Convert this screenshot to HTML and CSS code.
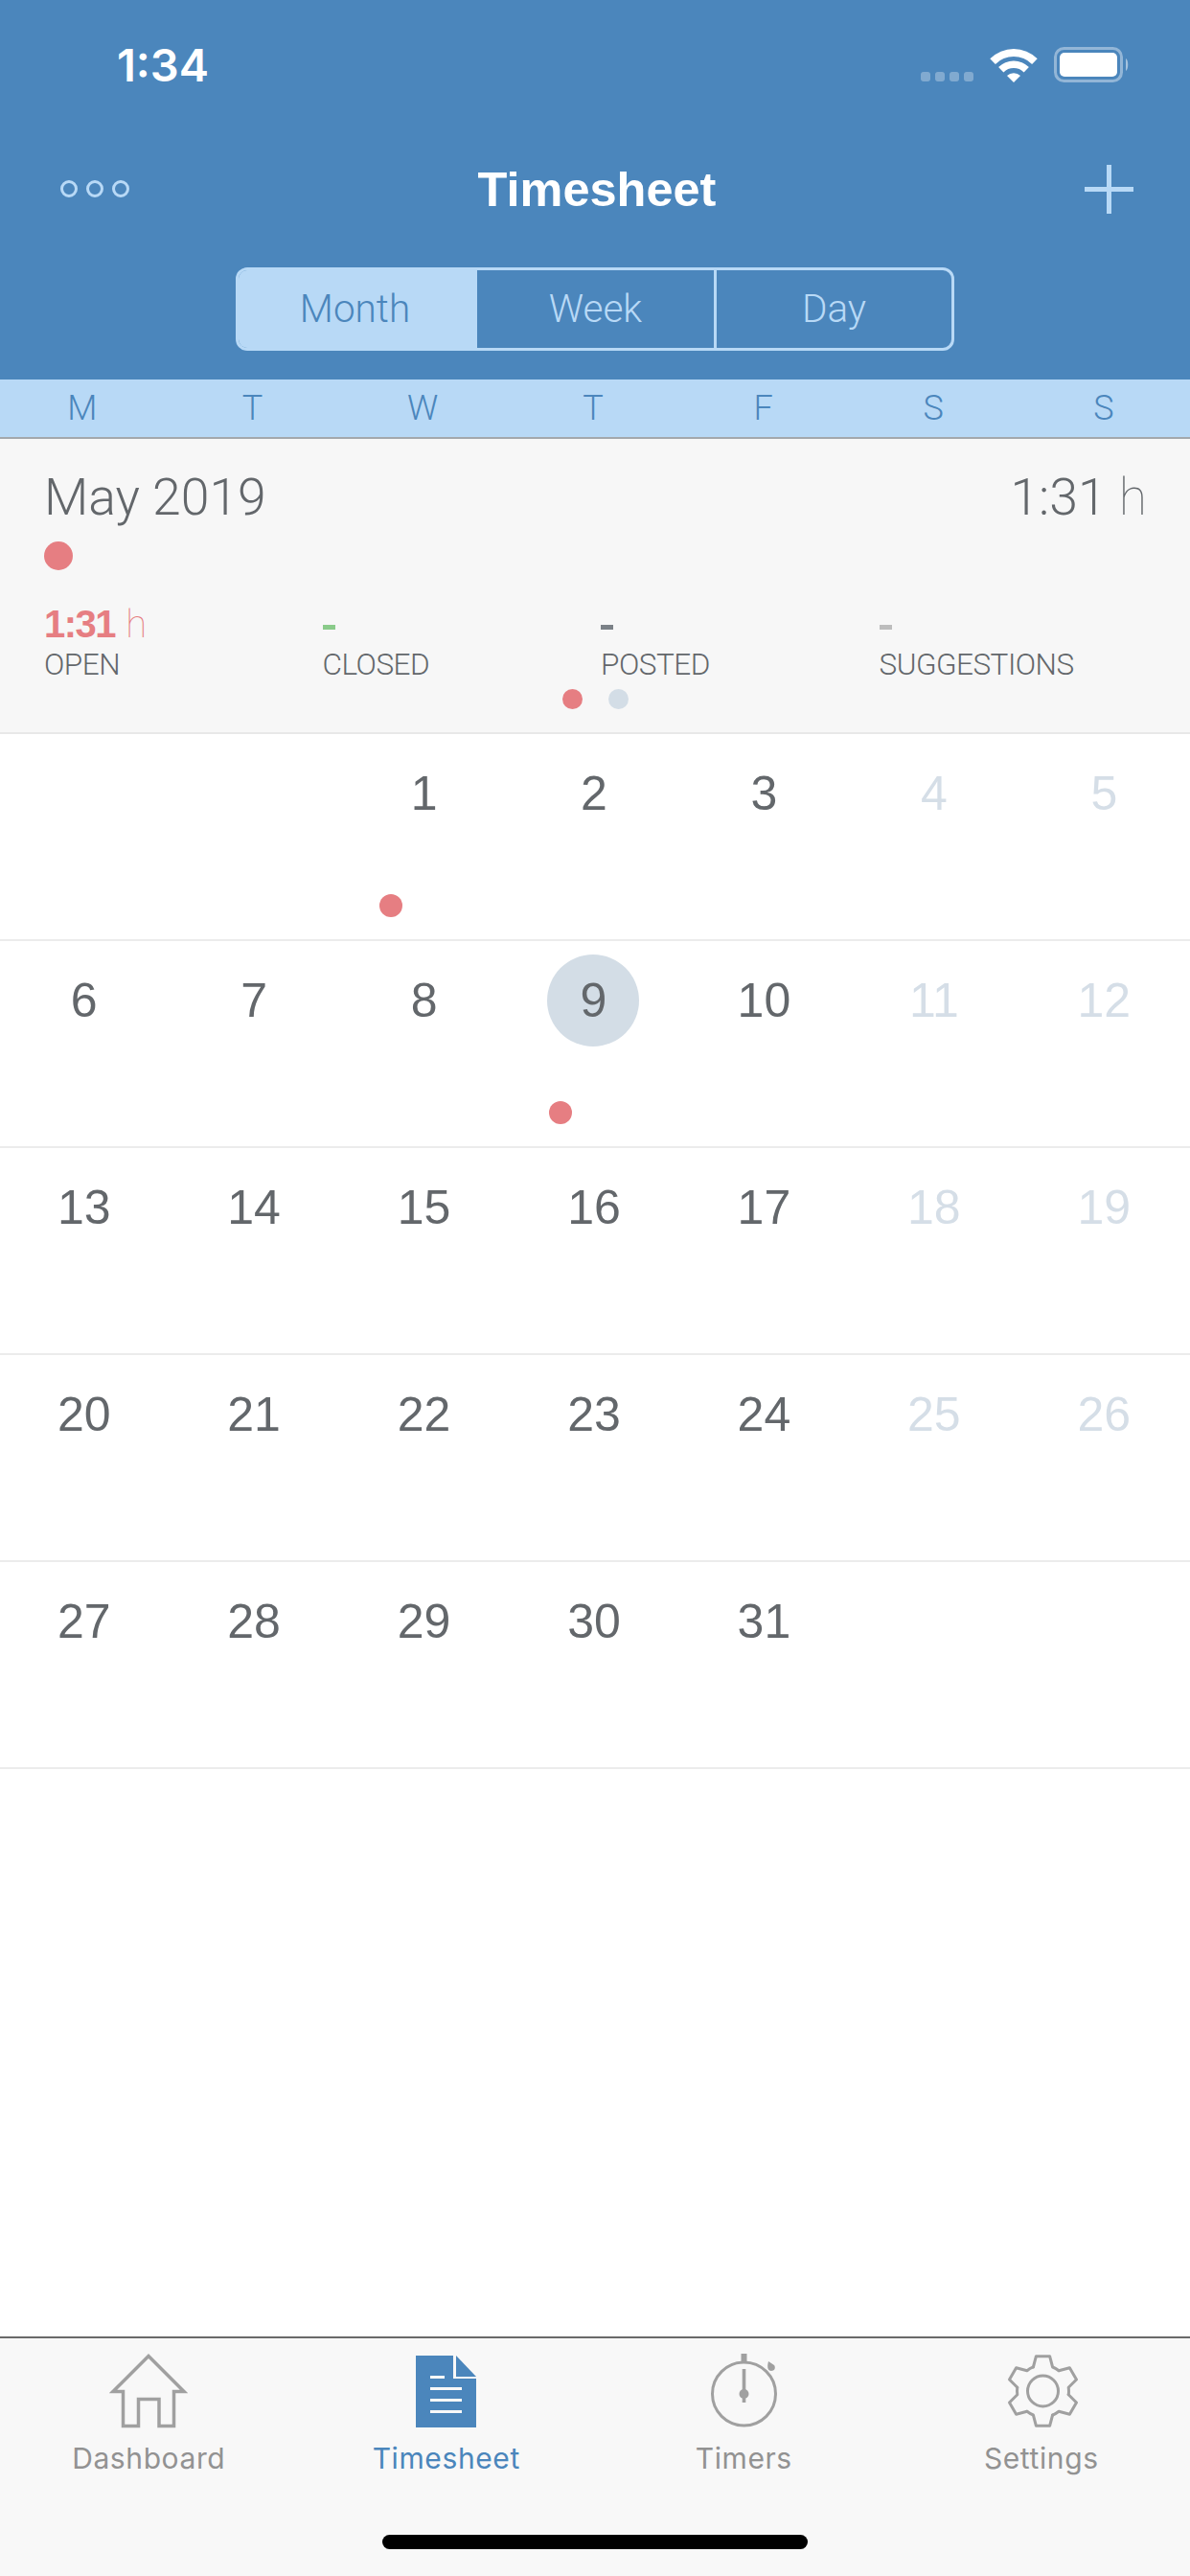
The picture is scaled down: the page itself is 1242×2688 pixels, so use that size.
FILE: index.html
```html
<!DOCTYPE html>
<html lang="en">
<head>
    <meta charset="UTF-8">
    <meta name="viewport" content="width=device-width, initial-scale=1.0">
    <title>Timesheet</title>
    <link rel="stylesheet" href="styles.css">
</head>
<body>
    <div id="app">
        <div id="header">
            <div class="status">
                <span class="clock">1:34</span>
                <div class="statusIcons">
                    <div class="signal"><i></i><i></i><i></i><i></i></div>
                    <svg class="wifi" width="50" height="36" viewBox="-25 -36 50 36" fill="#fff">
                        <path d="M-24.7-24.7A35 35 0 0 1 24.7-24.7L19.1-19.1A27 27 0 0 0-19.1-19.1Z"/>
                        <path d="M-15.9-15.9A22.5 22.5 0 0 1 15.9-15.9L10.6-10.6A15 15 0 0 0-10.6-10.6Z"/>
                        <path d="M-7-7A10 10 0 0 1 7-7L0 0Z"/>
                    </svg>
                    <svg class="battery" width="79" height="37" viewBox="0 0 79 37">
                        <rect x="1.5" y="1.5" width="69" height="34" rx="9" fill="none" stroke="#fff" stroke-opacity=".4" stroke-width="3"/>
                        <rect x="6" y="6" width="60" height="25" rx="5" fill="#fff"/>
                        <path d="M75 12C78 14 78 23 75 25Z" fill="#fff" fill-opacity=".5"/>
                    </svg>
                </div>
            </div>

            <div class="nav">
                <svg class="navLeft" width="72" height="18" viewBox="0 0 72 18" fill="none" stroke="#b8d9f6" stroke-width="3">
                    <circle cx="9" cy="9" r="7.5"/>
                    <circle cx="36" cy="9" r="7.5"/>
                    <circle cx="63" cy="9" r="7.5"/>
                </svg>
                <h1 class="title">Timesheet</h1>
                <svg class="navRight" width="51" height="51" viewBox="0 0 51 51" fill="#b8d9f6">
                    <rect x="23" y="0" width="5" height="51"/>
                    <rect x="0" y="23" width="51" height="5"/>
                </svg>
            </div>

            <div class="segments">
                <div class="segment active">Month</div>
                <div class="segment week">Week</div>
                <div class="segment">Day</div>
            </div>
        </div>

        <div class="weekdays">
            <span>M</span><span>T</span><span>W</span><span>T</span><span>F</span><span>S</span><span>S</span>
        </div>

        <div class="summary">
            <div class="monthRow">
                <span>May 2019</span>
                <span>1:31 <em>h</em></span>
            </div>
            <div class="monthDot"></div>
            <div class="stats">
                <div class="stat open">
                    <div class="value"><b>1:31</b> <em>h</em></div>
                    <div class="label">OPEN</div>
                </div>
                <div class="stat">
                    <div class="value"><i class="dash green"></i></div>
                    <div class="label">CLOSED</div>
                </div>
                <div class="stat">
                    <div class="value"><i class="dash grey"></i></div>
                    <div class="label">POSTED</div>
                </div>
                <div class="stat">
                    <div class="value"><i class="dash light"></i></div>
                    <div class="label">SUGGESTIONS</div>
                </div>
            </div>
            <div class="pager"><i class="on"></i><i></i></div>
        </div>

        <div class="calendar">
            <div class="day"></div>
            <div class="day"></div>
            <div class="day"><div class="num">1</div><div class="dot"></div></div>
            <div class="day"><div class="num">2</div></div>
            <div class="day"><div class="num">3</div></div>
            <div class="day off"><div class="num">4</div></div>
            <div class="day off"><div class="num">5</div></div>

            <div class="day"><div class="num">6</div></div>
            <div class="day"><div class="num">7</div></div>
            <div class="day"><div class="num">8</div></div>
            <div class="day"><div class="num today">9</div><div class="dot"></div></div>
            <div class="day"><div class="num">10</div></div>
            <div class="day off"><div class="num">11</div></div>
            <div class="day off"><div class="num">12</div></div>

            <div class="day"><div class="num">13</div></div>
            <div class="day"><div class="num">14</div></div>
            <div class="day"><div class="num">15</div></div>
            <div class="day"><div class="num">16</div></div>
            <div class="day"><div class="num">17</div></div>
            <div class="day off"><div class="num">18</div></div>
            <div class="day off"><div class="num">19</div></div>

            <div class="day"><div class="num">20</div></div>
            <div class="day"><div class="num">21</div></div>
            <div class="day"><div class="num">22</div></div>
            <div class="day"><div class="num">23</div></div>
            <div class="day"><div class="num">24</div></div>
            <div class="day off"><div class="num">25</div></div>
            <div class="day off"><div class="num">26</div></div>

            <div class="day"><div class="num">27</div></div>
            <div class="day"><div class="num">28</div></div>
            <div class="day"><div class="num">29</div></div>
            <div class="day"><div class="num">30</div></div>
            <div class="day"><div class="num">31</div></div>
            <div class="day"></div>
            <div class="day"></div>
        </div>

        <div class="spacer"></div>

        <div class="tabbar">
            <div class="tabs">
                <div class="tab">
                    <svg width="82" height="78" viewBox="0 0 82 78" fill="none" stroke="#a0a0a0" stroke-width="3.5">
                        <path d="M41 2.5L4 39.5H14.5V75.5H30.5V47.5H52V75.5H67.5V39.5H78Z"/>
                    </svg>
                    <span>Dashboard</span>
                </div>
                <div class="tab current">
                    <svg width="64" height="78" viewBox="0 0 64 78" fill="#4b86bc">
                        <path d="M0 2H39V26H63V77H0Z"/>
                        <path d="M42 2L63 24H42Z"/>
                        <path d="M15 23H30V26H15ZM15 35H48V38H15ZM15 47H48V50H15ZM15 59H48V62H15Z" fill="#f8f8f8"/>
                    </svg>
                    <span>Timesheet</span>
                </div>
                <div class="tab">
                    <svg width="72" height="78" viewBox="0 0 72 78" fill="#a0a0a0">
                        <circle cx="36.5" cy="42" r="33" fill="none" stroke="#a0a0a0" stroke-width="3"/>
                        <rect x="33.5" y="0" width="6" height="9"/>
                        <rect x="34.7" y="16" width="3.6" height="35"/>
                        <circle cx="36.5" cy="42" r="5"/>
                        <path d="M62 8L68 12C70 15 68 18 65 18C62 18 60 15 62 8Z"/>
                    </svg>
                    <span>Timers</span>
                </div>
                <div class="tab">
                    <svg width="76" height="78" viewBox="-39.5 -39 76 78" fill="none" stroke="#a0a0a0" stroke-width="3" stroke-linecap="round" stroke-linejoin="round">
                        <defs>
                            <path id="tooth" d="M-10.1-25L-7.1-36.3H7.1L10.1-25A27 27 0 0 1 16.6-21.3"/>
                        </defs>
                        <use href="#tooth"/>
                        <use href="#tooth" transform="rotate(60)"/>
                        <use href="#tooth" transform="rotate(120)"/>
                        <use href="#tooth" transform="rotate(180)"/>
                        <use href="#tooth" transform="rotate(240)"/>
                        <use href="#tooth" transform="rotate(300)"/>
                        <circle r="16"/>
                    </svg>
                    <span>Settings</span>
                </div>
            </div>
            <div class="homeBar"></div>
        </div>
    </div>
</body>
</html>
```

FILE: styles.css
```css
body{
    margin: 0;
    background-color: #fff;
}
#app{
    width: 1242px;
    height: 2688px;
    display: flex;
    flex-direction: column;
    overflow: hidden;
    font-family: "Liberation Sans", Arial, sans-serif;
    color: #63676b;
}
em{
    font-family: Roboto, sans-serif;
    font-style: normal;
    font-weight: 100;
}

/* blue header */
#header{
    background-color: #4b86bc;
    height: 396px;
    flex: none;
}
.status{
    height: 135px;
    display: flex;
    justify-content: space-between;
    align-items: center;
    padding: 0 63px 0 122px;
}
.clock{
    font-family: Inter, sans-serif;
    font-weight: 600;
    font-size: 47px;
    color: #fff;
}
.statusIcons{
    display: flex;
    align-items: flex-end;
    gap: 17px;
}
.signal{
    display: flex;
    gap: 5px;
    margin-bottom: 1px;
}
.signal i{
    width: 10px;
    height: 10px;
    border-radius: 3px;
    background: rgba(255,255,255,0.3);
}
.nav{
    height: 124px;
    display: grid;
    grid-template-columns: 1fr auto 1fr;
    align-items: center;
    padding: 0 59px 0 63px;
}
.navRight{
    justify-self: end;
}
.title{
    margin: 0;
    font-size: 50.5px;
    font-weight: 700;
    color: #fff;
}
.segments{
    display: flex;
    width: 750px;
    height: 87px;
    margin: 20px 0 0 246px;
    box-sizing: border-box;
    border: 3px solid #b8d9f6;
    border-radius: 12px;
    overflow: hidden;
}
.segment{
    flex: 1;
    text-align: center;
    line-height: 81px;
    font-family: Roboto, sans-serif;
    font-weight: 300;
    font-size: 40.5px;
    color: #b8d9f6;
    border-left: 3px solid #b8d9f6;
}
.segment.active{
    flex: none;
    width: 243px;
    padding-right: 3px;
    background-color: #b8d9f6;
    color: #4b86bc;
    border-left: none;
}
.segment.week{
    flex: none;
    width: 250px;
    box-sizing: border-box;
}

/* M T W ... */
.weekdays{
    flex: none;
    display: grid;
    grid-template-columns: repeat(7, 177.7px);
    height: 60px;
    line-height: 60px;
    text-align: center;
    font-family: Roboto, sans-serif;
    font-weight: 300;
    font-size: 36px;
    background-color: #b8d9f6;
    color: #4b86bc;
    border-bottom: 2px solid #a3a8ad;
}
.weekdays span{
    margin-left: -6px;
}

/* month totals */
.summary{
    flex: none;
    background-color: #f7f7f7;
    border-bottom: 2px solid #e8e8e8;
    padding: 31px 45px 24px 46px;
}
.monthRow{
    display: flex;
    justify-content: space-between;
    font-family: Roboto, sans-serif;
    font-weight: 300;
    font-size: 53.5px;
    line-height: 60px;
}
.monthDot{
    width: 30px;
    height: 30px;
    margin-top: 16px;
    border-radius: 50%;
    background-color: #e67e82;
}
.stats{
    display: grid;
    grid-template-columns: repeat(4, 290.5px);
    margin-top: 36px;
}
.value{
    display: flow-root;
    height: 40px;
    line-height: 40px;
    font-size: 40px;
}
.value b{
    letter-spacing: -1.5px;
}
.open .value{
    color: #e67e82;
}
.dash{
    display: block;
    width: 13px;
    height: 5px;
    margin-top: 21px;
}
.green{ background-color: #8acb8a; }
.grey{ background-color: #7b8187; }
.light{ background-color: #bdbdbd; }
.label{
    margin-top: 8px;
    line-height: 30px;
    font-family: Roboto, sans-serif;
    font-weight: 300;
    font-size: 31.5px;
    letter-spacing: -0.5px;
}
.pager{
    display: flex;
    justify-content: center;
    gap: 27px;
    margin-top: 10px;
}
.pager i{
    width: 21px;
    height: 21px;
    border-radius: 50%;
    background-color: #d3dde6;
}
.pager i.on{
    background-color: #e67e82;
}

/* days */
.calendar{
    flex: none;
    display: grid;
    grid-template-columns: repeat(7, 1fr);
    grid-auto-rows: 216px;
}
.day{
    display: flex;
    flex-direction: column;
    box-sizing: border-box;
    padding-top: 32px;
    border-bottom: 2px solid #ececec;
}
.num{
    line-height: 60px;
    padding-right: 2px;
    text-align: center;
    font-size: 50px;
}
.off .num{
    color: #d5dee7;
}
.num.today{
    width: 96px;
    height: 96px;
    padding-right: 0;
    line-height: 96px;
    margin: -18px 0 -18px 39px;
    border-radius: 50%;
    background-color: #d3dde6;
}
.dot{
    width: 24px;
    height: 24px;
    margin: 75px 0 0 41px;
    border-radius: 50%;
    background-color: #e67e82;
}
.spacer{
    flex: 1;
}

/* bottom tabs */
.tabbar{
    flex: none;
    height: 250px;
    box-sizing: border-box;
    background-color: #f8f8f8;
    border-top: 2px solid #6a6a6a;
    padding-top: 16px;
}
.tabs{
    display: grid;
    grid-template-columns: repeat(4, 1fr);
}
.tab{
    display: flex;
    flex-direction: column;
    align-items: center;
    font-family: Inter, sans-serif;
    font-size: 30px;
    line-height: 36px;
    letter-spacing: 0.6px;
    color: #929292;
}
.tab svg{
    display: block;
    margin-bottom: 13px;
}
.tab.current{
    color: #4b86bc;
}
.homeBar{
    width: 444px;
    height: 15px;
    margin: 62px auto 0;
    border-radius: 8px;
    background-color: #000;
}
```
